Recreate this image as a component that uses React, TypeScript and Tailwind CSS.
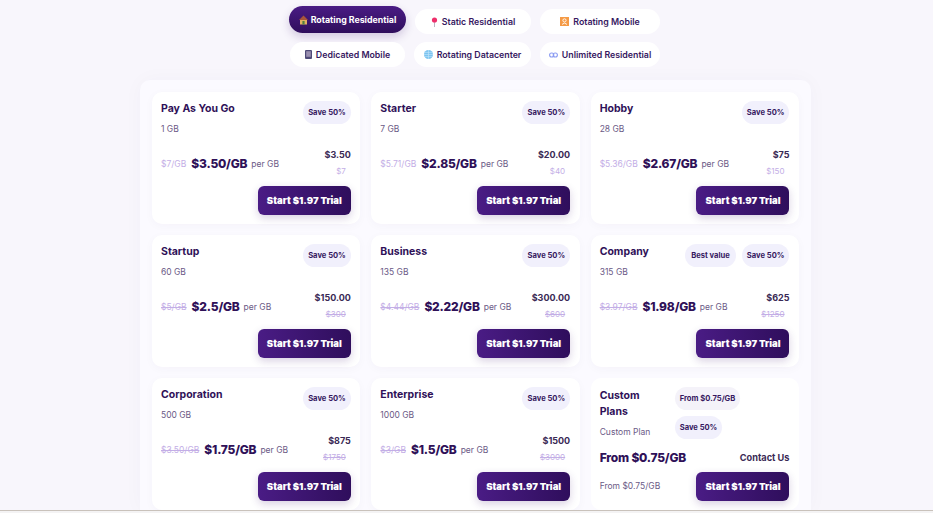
import { ReactNode } from 'react'

const font = 'font-["Inter","Liberation_Sans",sans-serif]'

function House() {
  return (
    <svg width="9" height="10" viewBox="0 0 9 10">
      <path d="M4.5 0.5 L9 5 H0 Z" fill="#a8553a" />
      <rect x="1" y="5" width="7" height="4.5" fill="#e0b060" />
      <rect x="3.4" y="6" width="2.2" height="3.5" fill="#4f7f3f" />
    </svg>
  )
}

function Pin() {
  return (
    <svg width="7" height="10" viewBox="0 0 7 10">
      <rect x="3" y="4" width="1" height="6" fill="#b9b4c4" />
      <circle cx="3.5" cy="3" r="2.6" fill="#ee2f6b" />
    </svg>
  )
}

function MobileTile() {
  return (
    <svg width="9" height="9" viewBox="0 0 9 9">
      <rect width="9" height="9" fill="#f59a45" />
      <circle cx="4.5" cy="3.4" r="1.6" stroke="#fff" strokeWidth="0.9" fill="none" />
      <path d="M2 7.4 Q4.5 4.8 7 7.4" stroke="#fff" strokeWidth="0.9" fill="none" />
    </svg>
  )
}

function Phone() {
  return (
    <svg width="7" height="9" viewBox="0 0 7 9">
      <rect width="7" height="9" rx="1" fill="#4f4a78" />
      <rect x="1.2" y="1.2" width="4.6" height="5.6" fill="#9a8fb0" />
    </svg>
  )
}

function Globe() {
  return (
    <svg width="9" height="9" viewBox="0 0 9 9">
      <circle cx="4.5" cy="4.5" r="4.5" fill="#7cc4f0" />
      <path d="M0 4.5 H9 M4.5 0 V9 M1 2.4 H8 M1 6.6 H8" stroke="#c5e6fa" strokeWidth="0.6" />
    </svg>
  )
}

function Chain() {
  return (
    <svg width="9" height="6" viewBox="0 0 9 6" fill="none" stroke="#8c9cf2" strokeWidth="1.1">
      <rect x="0.6" y="1" width="4.2" height="4" rx="2" />
      <rect x="4.2" y="1" width="4.2" height="4" rx="2" />
    </svg>
  )
}

function Tab({ icon, label, width, active }: { icon: ReactNode; label: string; width: string; active?: boolean }) {
  return (
    <button
      className={
        active
          ? `${width} h-[27px] -mt-[3px] rounded-full bg-gradient-to-b from-[#4a1c85] to-[#2f0e5c] text-white text-[8.8px] font-bold flex items-center justify-center gap-[3px] shadow-[0_4px_10px_rgba(60,20,110,0.2)]`
          : `${width} h-[25px] rounded-full bg-white text-[#36185f] text-[8.8px] font-semibold flex items-center justify-center gap-[4px]`
      }
    >
      {icon}
      {label}
    </button>
  )
}

function Badge({ children, tone }: { children: ReactNode; tone?: string }) {
  return (
    <span className={`h-[23px] rounded-full text-[#36185f] text-[7.6px] font-bold flex items-center whitespace-nowrap ${tone ?? 'px-[5px] bg-[#f1f0fc]'}`}>
      {children}
    </span>
  )
}

function TrialButton() {
  return (
    <button className="w-[93px] h-[29px] pt-[1px] rounded-md bg-gradient-to-r from-[#4a1c85] to-[#2f0e5c] text-white text-[9.5px] font-black shadow-[0_3px_8px_rgba(60,20,110,0.2)]">
      Start $1.97 Trial
    </button>
  )
}

type Plan = { name: string; gb: string; old: string; price: string; total: string; was: string; best?: boolean; plain?: boolean }

const plans: Plan[] = [
  { name: 'Pay As You Go', gb: '1 GB', old: '$7/GB', price: '$3.50/GB', total: '$3.50', was: '$7', plain: true },
  { name: 'Starter', gb: '7 GB', old: '$5.71/GB', price: '$2.85/GB', total: '$20.00', was: '$40', plain: true },
  { name: 'Hobby', gb: '28 GB', old: '$5.36/GB', price: '$2.67/GB', total: '$75', was: '$150', plain: true },
  { name: 'Startup', gb: '60 GB', old: '$5/GB', price: '$2.5/GB', total: '$150.00', was: '$300' },
  { name: 'Business', gb: '135 GB', old: '$4.44/GB', price: '$2.22/GB', total: '$300.00', was: '$600' },
  { name: 'Company', gb: '315 GB', old: '$3.97/GB', price: '$1.98/GB', total: '$625', was: '$1250', best: true },
  { name: 'Corporation', gb: '500 GB', old: '$3.50/GB', price: '$1.75/GB', total: '$875', was: '$1750' },
  { name: 'Enterprise', gb: '1000 GB', old: '$3/GB', price: '$1.5/GB', total: '$1500', was: '$3000' },
]

function PlanCard({ plan }: { plan: Plan }) {
  return (
    <div className="h-[132px] rounded-[10px] bg-white pt-[9px] pb-[9px] pl-[9px] pr-[9.5px] flex flex-col shadow-[0_2px_10px_rgba(60,20,110,0.03)]">
      <div className="flex justify-between h-[40px]">
        <div>
          <div className="text-[10.5px] leading-[15px] font-bold text-[#2f1158]">{plan.name}</div>
          <div className="mt-[7px] text-[8.5px] leading-[12px] text-[#6b5a86]">{plan.gb}</div>
        </div>
        <div className="flex gap-[6px]">
          {plan.best && <Badge tone="px-[6px] bg-[#f1f0fc]">Best value</Badge>}
          <Badge>Save 50%</Badge>
        </div>
      </div>
      <div className="flex items-center justify-between h-[36px] mt-[5px]">
        <div className="flex items-center">
          <span className={`text-[8.5px] text-[#c3aee6] ${plan.plain ? '' : 'line-through'}`}>{plan.old}</span>
          <span className="ml-[5px] text-[12px] font-extrabold tracking-[-0.2px] text-[#2f1158]">{plan.price}</span>
          <span className="ml-[4px] text-[8.5px] text-[#6b5a86]">per GB</span>
        </div>
        <div className="flex flex-col items-end -mt-[4px]">
          <span className="text-[9px] leading-[14px] font-bold text-[#3a2a55]">{plan.total}</span>
          <span className={`mr-[5px] mt-[3px] text-[8px] leading-[12px] text-[#c3aee6] ${plan.plain ? '' : 'line-through'}`}>{plan.was}</span>
        </div>
      </div>
      <div className="mt-auto flex justify-end">
        <TrialButton />
      </div>
    </div>
  )
}

function CustomCard() {
  return (
    <div className="h-[132px] rounded-[10px] bg-white pt-[9px] pb-[9px] pl-[9px] pr-[9.5px] flex flex-col">
      <div className="flex">
        <div className="w-[75px] pr-[18px] pt-[1px]">
          <div className="text-[10.5px] leading-[16px] font-bold text-[#2f1158]">Custom Plans</div>
          <div className="mt-[6px] text-[8.5px] leading-[12px] text-[#6b5a86]">Custom Plan</div>
        </div>
        <div className="flex flex-col items-start gap-[6px]">
          <Badge tone="px-[5px] bg-[#f4f2f9]">From $0.75/GB</Badge>
          <Badge>Save 50%</Badge>
        </div>
      </div>
      <div className="flex items-center justify-between mt-[10px]">
        <span className="text-[12px] leading-[18px] font-extrabold tracking-[-0.2px] text-[#2f1158]">From $0.75/GB</span>
        <span className="text-[9.2px] font-bold text-[#3a2a55]">Contact Us</span>
      </div>
      <div className="mt-auto flex items-center justify-between">
        <span className="text-[8.5px] text-[#6b5a86]">From $0.75/GB</span>
        <TrialButton />
      </div>
    </div>
  )
}

export default function App() {
  return (
    <div className={`h-screen overflow-hidden bg-[#f8f6fc] flex flex-col ${font}`}>
      <div className="flex-1 min-h-0 pl-[18px] flex flex-col items-center">
        <div className="pt-[9px] mr-[2px] flex flex-col gap-[8px] w-[371px]">
          <div className="flex justify-between">
            <Tab active width="w-[117px]" icon={<House />} label="Rotating Residential" />
            <Tab width="w-[116px]" icon={<Pin />} label="Static Residential" />
            <Tab width="w-[120px]" icon={<MobileTile />} label="Rotating Mobile" />
          </div>
          <div className="flex justify-between">
            <Tab width="w-[115px] ml-[1px]" icon={<Phone />} label="Dedicated Mobile" />
            <Tab width="w-[117px]" icon={<Globe />} label="Rotating Datacenter" />
            <Tab width="w-[120px]" icon={<Chain />} label="Unlimited Residential" />
          </div>
        </div>
        <div className="mt-[13px] w-[671px] flex-1 rounded-t-[10px] bg-[#fbfaff] pt-[12px] pl-[12px] pr-[12px] shadow-[0_0_20px_rgba(60,20,110,0.03)]">
          <div className="grid grid-cols-3 gap-[11px]">
            {plans.map((p) => (
              <PlanCard key={p.name} plan={p} />
            ))}
            <CustomCard />
          </div>
        </div>
      </div>
      <div className="h-[1px] w-full shrink-0 bg-[#c9c2bb]" />
      <div className="h-[2px] w-full shrink-0 bg-[#f4f3f4]" />
    </div>
  )
}
